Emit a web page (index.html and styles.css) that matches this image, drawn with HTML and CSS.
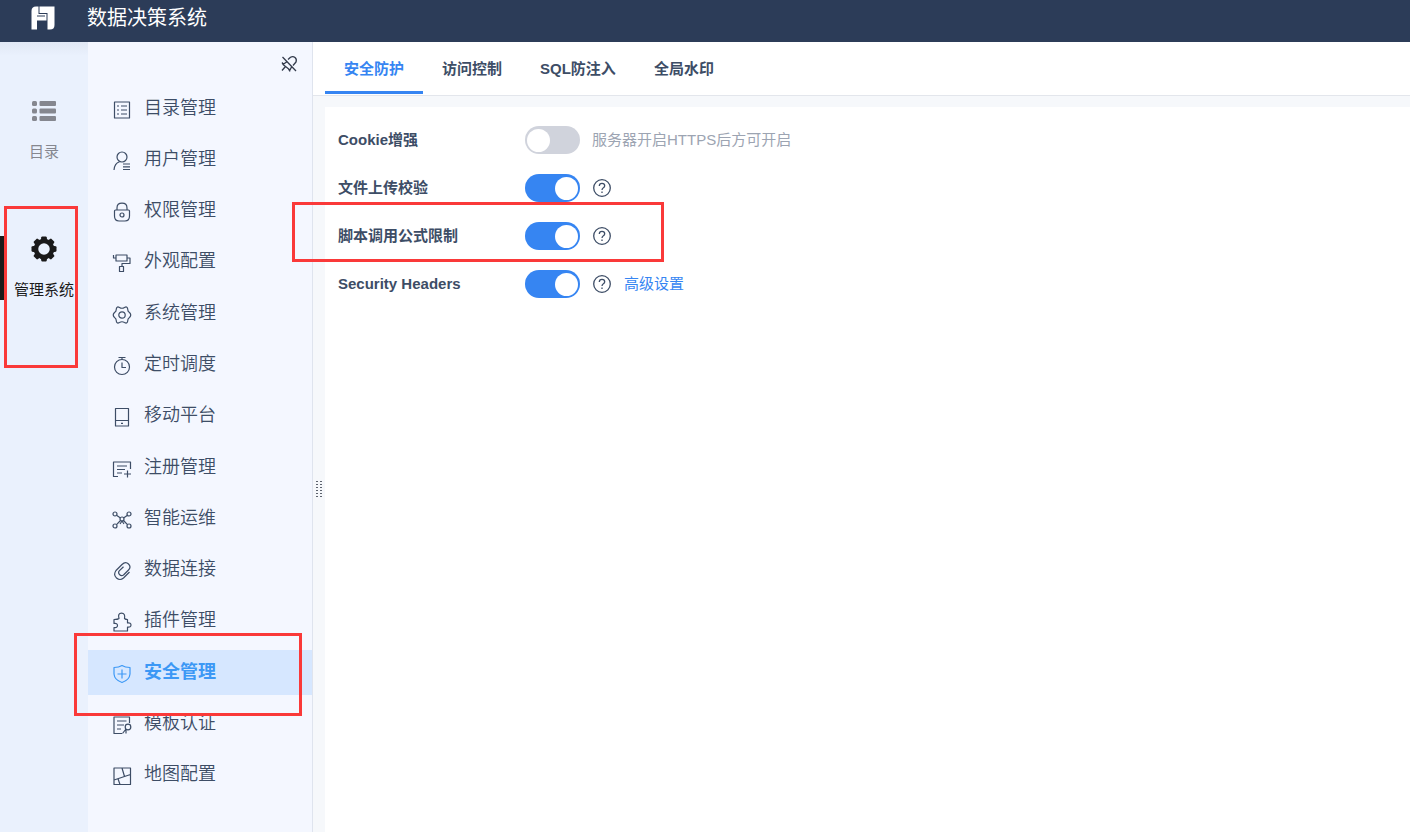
FILE: index.html
```
<!DOCTYPE html>
<html lang="zh-CN">
<head>
<meta charset="utf-8">
<title>数据决策系统</title>
<link rel="stylesheet" href="styles.css">
</head>
<body>
<div class="app">
  <header class="topbar">
    <svg class="logo" viewBox="0 0 24 24" aria-hidden="true"><path fill="#fff" d="M5 .500H7.500V8H15.500V14.500H6V23.500H.500V5Q.500 .500 5 .500ZM8.500 .500H23.500V19Q23.500 23.500 19 23.500H16.500V7H8.500Z"/><path fill="#2c3c58" d="M6 9.500H14V10.500H6Z"/></svg>
    <h1 class="title">数据决策系统</h1>
  </header>
  <div class="body">
    <nav class="rail">
      <button class="rail-item" type="button">
        <svg class="rail-icon" viewBox="0 0 26 26"><g fill="currentColor"><rect x="1" y="3" width="5" height="5" rx="1.500"/><rect x="1" y="10.500" width="5" height="5" rx="1.500"/><rect x="1" y="18" width="5" height="5" rx="1.500"/><rect x="8.500" y="3" width="16.500" height="5" rx="1"/><rect x="8.500" y="10.500" width="16.500" height="5" rx="1"/><rect x="8.500" y="18" width="16.500" height="5" rx="1"/></g></svg>
        <span>目录</span>
      </button>
      <button class="rail-item active" type="button">
        <svg class="rail-icon" viewBox="0 0 26 26"><circle cx="13" cy="13" r="8" fill="none" stroke="currentColor" stroke-width="4.500"/><g fill="currentColor"><path id="tooth" d="M9.800 4 10.300 1.200Q10.500 .5 11.200 .5H14.800Q15.500 .5 15.700 1.200L16.200 4Z"/><use href="#tooth" transform="rotate(45 13 13)"/><use href="#tooth" transform="rotate(90 13 13)"/><use href="#tooth" transform="rotate(135 13 13)"/><use href="#tooth" transform="rotate(180 13 13)"/><use href="#tooth" transform="rotate(225 13 13)"/><use href="#tooth" transform="rotate(270 13 13)"/><use href="#tooth" transform="rotate(315 13 13)"/></g></svg>
        <span>管理系统</span>
      </button>
      <div class="mark mark-rail"></div>
    </nav>
    <aside class="side">
      <div class="side-tools">
        <button class="pin" type="button" aria-label="取消固定"><svg class="pin-icon" viewBox="0 0 18 18"><path d="M2.500 2 16 16M8 4.500 10.500 2.200Q13 .8 15 2.500T16 7L13 10.500M11.500 12 10 15 3 9.500 6.500 7M3.500 9.500 2 7.500M8.500 14 10 16.500M5.500 11.500 2 15.500"/></svg></button>
      </div>
      <nav class="menu">
        <a class="item" href="#"><svg class="icon" viewBox="0 0 20 20"><path d="M2.500 2H17.500V18H2.500ZM5 6H7M9 6H15M5 10H7M9 10H15M5 14H7M9 14H15"/></svg>目录管理</a>
        <a class="item" href="#"><svg class="icon" viewBox="0 0 20 20"><circle cx="10" cy="6" r="5"/><path d="M2 19Q2.500 12.500 7.500 10.800M11 13H18M11 15.800H18M11 18.500H18"/></svg>用户管理</a>
        <a class="item" href="#"><svg class="icon" viewBox="0 0 20 20"><path d="M5 8V6Q5 1.200 10 1.200T15 6V8M3.500 8H16.500Q17.500 8 17.500 9V14Q17.500 19 13 19H7Q2.500 19 2.500 14V9Q2.500 8 3.500 8Z"/><circle cx="10" cy="13" r="2"/></svg>权限管理</a>
        <a class="item" href="#"><svg class="icon" viewBox="0 0 20 20"><path d="M4 2H15V8H4ZM1.500 2V5H4M15 5H18V10.500H10V13.500M7.500 13.500H11.500V18.500H7.500Z"/></svg>外观配置</a>
        <a class="item" href="#"><svg class="icon" viewBox="0 0 20 20"><circle cx="10" cy="10" r="3.200"/><path d="M7.500 2.500Q10 4 12.500 2.500 15.500 .8 15.800 4.500 15.700 6.500 17.500 7.500 20 10 17.500 12.500 15.700 13.500 15.800 15.500 15.500 19.200 12.500 17.500 10 16 7.500 17.500 4.500 19.200 4.200 15.500 4.300 13.500 2.500 12.500 0 10 2.500 7.500 4.300 6.500 4.200 4.500 4.500 .8 7.500 2.500Z"/></svg>系统管理</a>
        <a class="item" href="#"><svg class="icon" viewBox="0 0 20 20"><circle cx="10" cy="11" r="7.500"/><path d="M6.500 1.500H13.500M10 1.500V3.500M10 6.500V11.500H14"/></svg>定时调度</a>
        <a class="item" href="#"><svg class="icon" viewBox="0 0 20 20"><path d="M3.500 1.500H16.500V19H3.500ZM3.500 13.500H16.500M9 16.300H11"/></svg>移动平台</a>
        <a class="item" href="#"><svg class="icon" viewBox="0 0 20 20"><path d="M6 17.500H1.500V3H18.500V10M5 7H15M5 10.500H13M5 14H10M12 15H19M15.500 11.500V18.500"/></svg>注册管理</a>
        <a class="item" href="#"><svg class="icon" viewBox="0 0 20 20"><circle cx="3" cy="4" r="2"/><circle cx="17" cy="4" r="2"/><circle cx="3" cy="16" r="2"/><circle cx="17" cy="16" r="2"/><circle cx="10" cy="9" r="2"/><path d="M4.500 5.300 8.500 8M15.500 5.300 11.500 8M4.500 14.700 8.500 10.500M15.500 14.700 11.500 10.500M8 14 10 11 12 14"/></svg>智能运维</a>
        <a class="item" href="#"><svg class="icon" viewBox="0 0 20 20"><path d="M17.500 11 11.500 17Q8 20 4.500 17T4 9.500L10 3.500Q13.500 0 16.500 3T16.500 9L11.500 14Q9.300 15.500 7.500 13.500T7.500 9.700L11.500 5.800"/></svg>数据连接</a>
        <a class="item" href="#"><svg class="icon" viewBox="0 0 20 20"><path d="M2 7.500Q6 7.500 7 6.500 5.500 1.200 9.500 1.200T12.500 6.500Q13.500 7.500 15.500 7.500V11Q19 10.500 19 13T15.500 15V19H2V15.500Q5.500 16 5.500 13.500T2 11.500Z"/></svg>插件管理</a>
        <a class="item selected" href="#" aria-current="page"><svg class="icon" viewBox="0 0 20 20"><path d="M10 1.500Q13 3.500 18 3.500V10Q17.500 16 10 18.500 2.500 16 2 10V3.500Q7 3.500 10 1.500ZM10 5.500V14.500M5.500 10H14.500"/></svg>安全管理</a>
        <a class="item" href="#"><svg class="icon" viewBox="0 0 20 20"><path d="M10 18.500H2V2H17.500V8M5 6H14.500M5 10H12M5 14H9M14 14 10.500 18.500M14 14.500V18.500"/><circle cx="16" cy="12" r="2.800"/></svg>模板认证</a>
        <a class="item" href="#"><svg class="icon" viewBox="0 0 20 20"><path d="M2 2H18.500V18.500H2ZM2 14 18.500 8.500M10 2 12.500 10.500M6 12.800 8 18.500"/></svg>地图配置</a>
      </nav>
      <div class="mark mark-menu"></div>
    </aside>
    <div class="splitter"><svg class="grip" viewBox="0 0 6 16"><path d="M1 0V16M5 0V16"/></svg></div>
    <main class="main">
      <div class="tabs" role="tablist">
        <button class="tab current" type="button" role="tab" aria-selected="true">安全防护</button>
        <button class="tab" type="button" role="tab">访问控制</button>
        <button class="tab" type="button" role="tab">SQL防注入</button>
        <button class="tab" type="button" role="tab">全局水印</button>
      </div>
      <section class="panel">
        <div class="row"><label class="label" for="s1">Cookie增强</label><input class="switch" id="s1" type="checkbox" disabled><span class="hint">服务器开启HTTPS后方可开启</span></div>
        <div class="row"><label class="label" for="s2">文件上传校验</label><input class="switch" id="s2" type="checkbox" checked><button class="help" type="button" aria-label="帮助"><svg class="help-icon" viewBox="0 0 20 20"><circle cx="10" cy="10" r="8.300"/><path d="M7.300 8Q7.300 5.300 10 5.300T12.700 7.800Q12.700 9 11.400 9.800T10 12M10 13.500V15"/></svg></button></div>
        <div class="row"><label class="label" for="s3">脚本调用公式限制</label><input class="switch" id="s3" type="checkbox" checked><button class="help" type="button" aria-label="帮助"><svg class="help-icon" viewBox="0 0 20 20"><circle cx="10" cy="10" r="8.300"/><path d="M7.300 8Q7.300 5.300 10 5.300T12.700 7.800Q12.700 9 11.400 9.800T10 12M10 13.500V15"/></svg></button><div class="mark mark-row"></div></div>
        <div class="row"><label class="label" for="s4">Security Headers</label><input class="switch" id="s4" type="checkbox" checked><button class="help" type="button" aria-label="帮助"><svg class="help-icon" viewBox="0 0 20 20"><circle cx="10" cy="10" r="8.300"/><path d="M7.300 8Q7.300 5.300 10 5.300T12.700 7.800Q12.700 9 11.400 9.800T10 12M10 13.500V15"/></svg></button><a class="link" href="#">高级设置</a></div>
      </section>
    </main>
  </div>
</div>
</body>
</html>
```
FILE: styles.css
```
* { box-sizing: border-box; }
body { margin: 0; font: 15px/20px "Liberation Sans", "Noto Sans CJK SC", sans-serif; color: #3d4d66; }
button { border: 0; padding: 0; background: none; font: inherit; color: inherit; cursor: pointer; }
a { color: inherit; text-decoration: none; }
svg { display: block; flex: none; fill: none; stroke-linejoin: round; }

.app { min-height: 100vh; display: flex; flex-direction: column; }
.topbar { height: 42px; display: flex; align-items: center; gap: 32px; padding: 0 31px 6px; background: #2c3c58; color: #fff; }
.logo { width: 24px; height: 24px; }
.title { margin: 0; font-size: 20px; line-height: 28px; font-weight: 400; }
.body { flex: 1; display: flex; }

.rail { width: 88px; flex: none; padding-top: 56px; background: linear-gradient(#e1e8f5, #eaf1fd 14px); position: relative; }
.rail-item { width: 100%; height: 64px; margin-bottom: 74px; display: flex; flex-direction: column; align-items: center; justify-content: space-between; color: #85878f; white-space: nowrap; }
.rail-item.active { color: #1a1a1a; border-left: 4px solid #1a1a1a; padding-right: 4px; }
.rail-icon { width: 26px; height: 26px; }

.side { width: 224px; flex: none; display: flex; flex-direction: column; background: #f4f7ff; position: relative; z-index: 1; }
.side-tools { height: 44px; display: flex; justify-content: flex-end; align-items: center; padding-right: 14px; }
.pin-icon { width: 18px; height: 18px; stroke: #333b4c; stroke-width: 1.3; }
.menu { flex: 1; display: flex; flex-direction: column; justify-content: space-between; padding-bottom: 34px; }
.item { height: 45px; display: flex; align-items: center; gap: 12px; padding: 0 24px 2px; font-size: 18px; line-height: 28px; font-weight: 350; }
.icon { width: 20px; height: 20px; margin-top: 4px; stroke: currentColor; stroke-width: 1.2; }
.item.selected { background: #d6e7ff; color: #3c98f5; font-weight: 700; }

.splitter { width: 13px; flex: none; display: flex; align-items: center; justify-content: center; padding-top: 104px; background: #f6f8fb; border-left: 1px solid #dfe4ee; }
.grip { width: 6px; height: 16px; stroke: #5d636e; stroke-width: 2; stroke-dasharray: 1 2; }

.main { flex: 1; min-width: 0; display: flex; flex-direction: column; background: #f6f8fb; }
.tabs { height: 54px; display: flex; align-items: flex-start; background: #fff; border-bottom: 1px solid #e3e6ec; margin-left: -12px; padding-left: 12px; }
.tab { height: 52px; padding: 4px 19px 0; border-bottom: 3px solid transparent; font-weight: 700; }
.tab.current { color: #3685f2; border-color: #3685f2; }
.panel { flex: 1; margin-top: 11px; padding: 19px 13px; display: flex; flex-direction: column; gap: 20px; background: #fff; }
.row { height: 28px; display: flex; align-items: center; position: relative; }
.label { width: 187px; font-weight: 700; }
.switch { appearance: none; flex: none; width: 55px; height: 28px; margin: 0 12px 0 0; border-radius: 14px; background: #3685f2; display: flex; align-items: center; justify-content: flex-end; padding: 0 2px; }
.switch::before { content: ""; width: 23px; height: 23px; border-radius: 50%; background: #fff; }
.switch:not(:checked) { background: #d0d3dc; justify-content: flex-start; }
.hint { color: #9ca4b2; }
.help { margin-right: 12px; }
.help-icon { width: 20px; height: 20px; stroke: #3d4d66; stroke-width: 1.3; }
.link { color: #3685f2; }

.mark { position: absolute; border: 3px solid #fa3939; pointer-events: none; }
.mark-rail { left: 4px; top: 164px; width: 74px; height: 162px; }
.mark-menu { left: -14px; bottom: 116px; width: 228px; height: 83px; }
.mark-row { left: -46px; top: -20px; width: 372px; height: 60px; z-index: 2; }
```
